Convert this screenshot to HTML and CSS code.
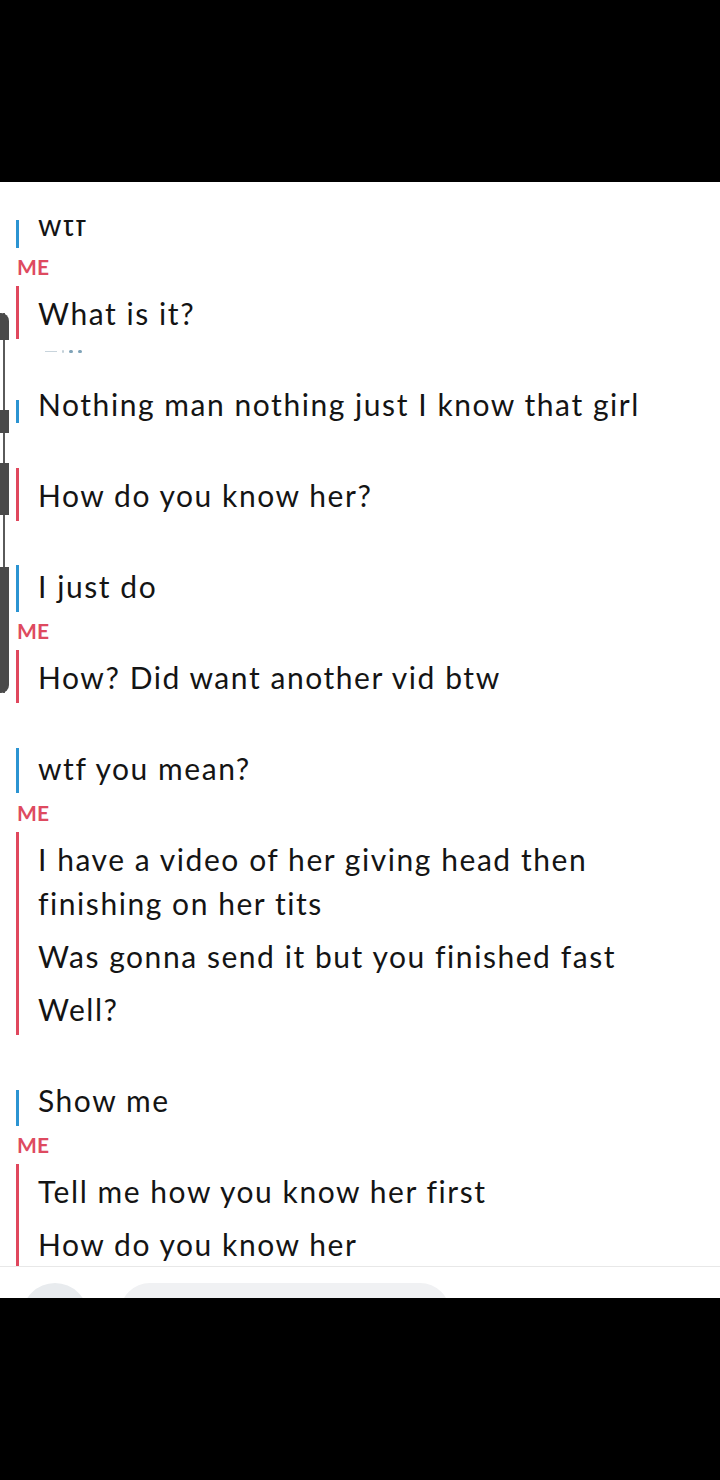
FILE: index.html
```html
<!DOCTYPE html>
<html lang="en">
<head>
<meta charset="utf-8">
<title>Chat</title>
<link rel="stylesheet" href="styles.css">
</head>
<body>
<div class="screen">
  <div class="blackbar"></div>
  <div class="chat">
    <div class="viewport">
      <div class="thread">
        <div class="group them g-first">
          <div class="bar"></div>
          <div class="msgs"><p class="msg">wtf</p></div>
        </div>
        <div class="header"><span class="me-label">ME</span></div>
        <div class="group me">
          <div class="bar"></div>
          <div class="msgs"><p class="msg">What is it?</p></div>
        </div>
        <div class="header">
          <div class="dots"><span class="d-dash"></span><span class="d-dot faint"></span><span class="d-dot"></span><span class="d-dot"></span></div>
        </div>
        <div class="group them">
          <div class="bar bar-short-a"></div>
          <div class="msgs"><p class="msg">Nothing man nothing just I know that girl</p></div>
        </div>
        <div class="header"></div>
        <div class="group me">
          <div class="bar"></div>
          <div class="msgs"><p class="msg">How do you know her?</p></div>
        </div>
        <div class="header"></div>
        <div class="group them">
          <div class="bar bar-short-b"></div>
          <div class="msgs"><p class="msg">I just do</p></div>
        </div>
        <div class="header"><span class="me-label">ME</span></div>
        <div class="group me">
          <div class="bar"></div>
          <div class="msgs"><p class="msg">How? Did want another vid btw</p></div>
        </div>
        <div class="header"></div>
        <div class="group them">
          <div class="bar bar-short-c"></div>
          <div class="msgs"><p class="msg">wtf you mean?</p></div>
        </div>
        <div class="header"><span class="me-label">ME</span></div>
        <div class="group me">
          <div class="bar"></div>
          <div class="msgs">
            <p class="msg">I have a video of her giving head then finishing on her tits</p>
            <p class="msg">Was gonna send it but you finished fast</p>
            <p class="msg">Well?</p>
          </div>
        </div>
        <div class="header"></div>
        <div class="group them">
          <div class="bar bar-short-d"></div>
          <div class="msgs"><p class="msg">Show me</p></div>
        </div>
        <div class="header"><span class="me-label">ME</span></div>
        <div class="group me">
          <div class="bar"></div>
          <div class="msgs">
            <p class="msg">Tell me how you know her first</p>
            <p class="msg">How do you know her</p>
          </div>
        </div>
      </div>
    </div>
    <div class="composer">
      <div class="circle"></div>
      <div class="pill"></div>
    </div>
  </div>
  <div class="blackbar"></div>

  <div class="edge">
    <div class="edge-line"></div>
    <div class="edge-block eb1"></div>
    <div class="edge-block eb2"></div>
    <div class="edge-block eb3"></div>
    <div class="edge-block eb4"></div>
  </div>
</div>
</body>
</html>
```

FILE: styles.css
```css
html, body {
  margin: 0;
  padding: 0;
  background: #000;
}

.screen {
  position: relative;
  width: 720px;
  height: 1480px;
  display: flex;
  flex-direction: column;
  background: #000;
  font-family: "Lato", "Liberation Sans", sans-serif;
}

.blackbar {
  height: 182px;
  flex: none;
  background: #000;
}

.chat {
  height: 1116px;
  flex: none;
  background: #fff;
  display: flex;
  flex-direction: column;
  overflow: hidden;
}

.viewport {
  margin-top: 38px;
  height: 1046px;
  flex: none;
  overflow: hidden;
}

.thread {
  display: flex;
  flex-direction: column;
}

.group {
  display: flex;
  padding-left: 16px;
}

.g-first {
  margin-top: -25px;
}

.bar {
  width: 3px;
  flex: none;
}

.group.me .bar { background: #e0475d; }
.group.them .bar { background: #2b94d2; }

.bar-short-a { margin: 23px 0 7px; }
.bar-short-b { margin-top: 6px; }
.bar-short-c { margin: 7px 0 1px; }
.bar-short-d { margin-top: 17px; }

.msgs {
  flex: 1;
  padding: 5px 36px 4px 19px;
  display: flex;
  flex-direction: column;
  gap: 9px;
}

.g-first .msgs {
  padding-top: 7px;
  padding-bottom: 2px;
}

.msg {
  margin: 0;
  font-size: 30px;
  line-height: 44px;
  letter-spacing: 1.55px;
  font-variant-ligatures: none;
  color: #141414;
}

.header {
  height: 38px;
  flex: none;
  box-sizing: border-box;
  padding: 8px 0 8px 17px;
  display: flex;
  align-items: flex-start;
}

.me-label {
  font-size: 21px;
  line-height: 22px;
  font-weight: 700;
  letter-spacing: 0.2px;
  color: #de4a60;
}

.dots {
  margin: 3px 0 0 28px;
  display: flex;
  align-items: center;
  gap: 5px;
}

.d-dash {
  width: 12px;
  height: 1px;
  background: #c8d4dc;
}

.d-dot {
  width: 4px;
  height: 3px;
  border-radius: 2px;
  background: #7fa3b8;
}

.d-dot.faint {
  width: 2px;
  background: #c3d0d8;
}

.composer {
  flex: 1;
  border-top: 1px solid #e8e8e8;
  display: flex;
  align-items: flex-start;
  padding: 16px 0 0 22px;
  gap: 32px;
  overflow: hidden;
}

.circle {
  width: 66px;
  height: 66px;
  flex: none;
  border-radius: 50%;
  background: #e8ebee;
}

.pill {
  width: 330px;
  height: 60px;
  flex: none;
  border-radius: 30px;
  background: #f0f1f3;
}

/* dark artifact along the left edge, lying over the content */
.edge {
  position: absolute;
  left: 0;
  top: 0;
  width: 10px;
  height: 1480px;
  pointer-events: none;
}

.edge-line {
  position: absolute;
  left: 3px;
  top: 313px;
  width: 2px;
  height: 380px;
  background: #5a5a5a;
}

.edge-block {
  position: absolute;
  left: 0;
  width: 9px;
  background: #4a4a4a;
}

.eb1 { top: 313px; height: 27px; border-top-right-radius: 8px; }
.eb2 { top: 410px; height: 23px; }
.eb3 { top: 463px; height: 52px; }
.eb4 { top: 567px; height: 126px; border-bottom-right-radius: 8px; }
```
